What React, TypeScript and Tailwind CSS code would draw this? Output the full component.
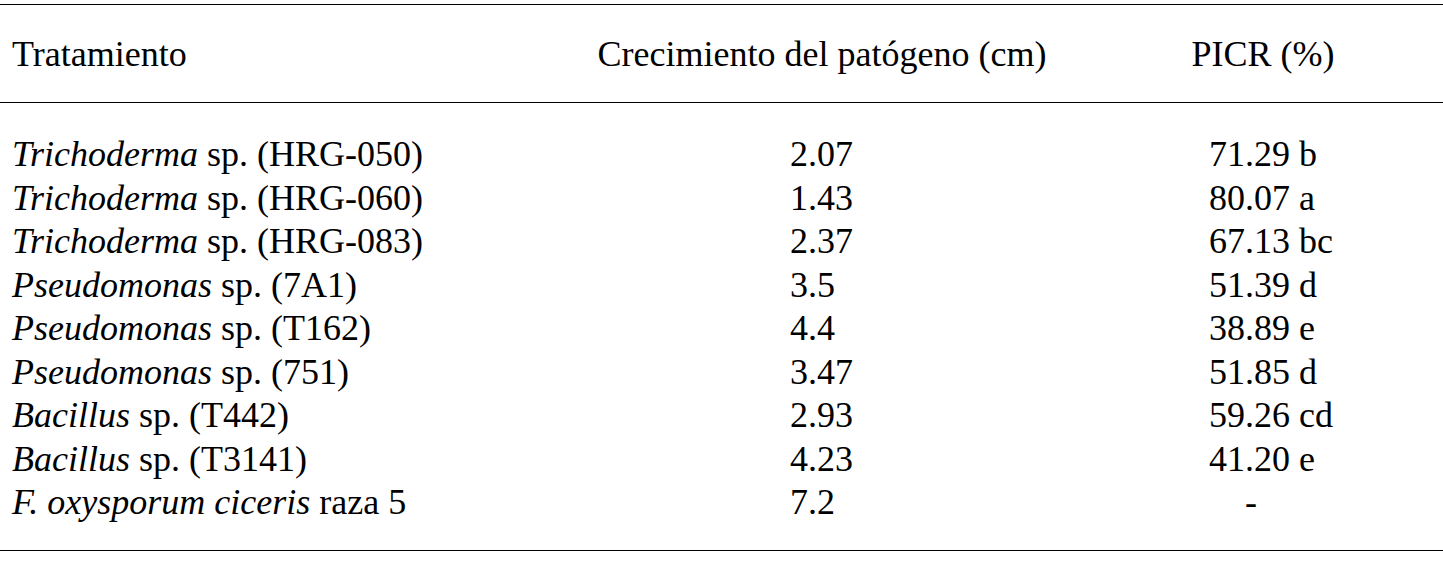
const rows: { genus: string; rest: string; growth: string; picr: string }[] = [
  { genus: "Trichoderma", rest: " sp. (HRG-050)", growth: "2.07", picr: "71.29 b" },
  { genus: "Trichoderma", rest: " sp. (HRG-060)", growth: "1.43", picr: "80.07 a" },
  { genus: "Trichoderma", rest: " sp. (HRG-083)", growth: "2.37", picr: "67.13 bc" },
  { genus: "Pseudomonas", rest: " sp. (7A1)", growth: "3.5", picr: "51.39 d" },
  { genus: "Pseudomonas", rest: " sp. (T162)", growth: "4.4", picr: "38.89 e" },
  { genus: "Pseudomonas", rest: " sp. (751)", growth: "3.47", picr: "51.85 d" },
  { genus: "Bacillus", rest: " sp. (T442)", growth: "2.93", picr: "59.26 cd" },
  { genus: "Bacillus", rest: " sp. (T3141)", growth: "4.23", picr: "41.20 e" },
  { genus: "F. oxysporum ciceris", rest: " raza 5", growth: "7.2", picr: "-" },
];

export default function App() {
  return (
    <div className="font-serif">
      <div className="font-[family-name:'Liberation_Serif',serif]">
        <div className="w-[1443px] h-[571px] bg-white pt-[3.5px] text-black text-[36px] leading-[43.5px]">
          <div className="h-[1.5px] bg-black" />

          {/* header */}
          <div className="flex pt-[28px] pb-[25px]">
            <div className="w-[647px] pl-[12px] whitespace-nowrap">Tratamiento</div>
            <div className="w-[350px] flex justify-center whitespace-nowrap">
              <span>Crecimiento del patógeno (cm)</span>
            </div>
            <div className="w-[146px]" />
            <div className="w-[240px] flex justify-center whitespace-nowrap">
              <span>PICR (%)</span>
            </div>
          </div>

          <div className="h-[1.5px] bg-black" />

          {/* body */}
          <div className="pt-[30px] pb-[25px]">
            {rows.map((r, i) => (
              <div key={i} className="grid grid-cols-[790px_419px_1fr] whitespace-nowrap">
                <div className="pl-[12px]">
                  <i>{r.genus}</i>
                  {r.rest}
                </div>
                <div>{r.growth}</div>
                <div>{r.picr === "-" ? <span className="ml-[36px]">-</span> : r.picr}</div>
              </div>
            ))}
          </div>

          <div className="h-[1.5px] bg-black" />
        </div>
      </div>
    </div>
  );
}
